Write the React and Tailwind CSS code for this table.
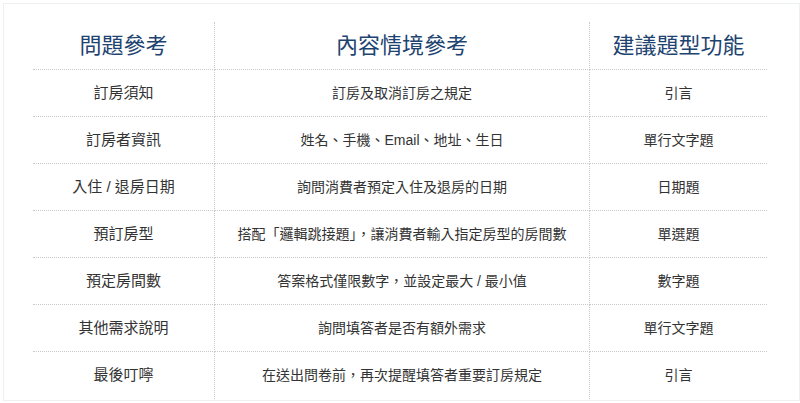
const rows = [
  ['訂房須知', '訂房及取消訂房之規定', '引言'],
  ['訂房者資訊', '姓名、手機、Email、地址、生日', '單行文字題'],
  ['入住 / 退房日期', '詢問消費者預定入住及退房的日期', '日期題'],
  ['預訂房型', '搭配「邏輯跳接題」，讓消費者輸入指定房型的房間數', '單選題'],
  ['預定房間數', '答案格式僅限數字，並設定最大 / 最小值', '數字題'],
  ['其他需求說明', '詢問填答者是否有額外需求', '單行文字題'],
  ['最後叮嚀', '在送出問卷前，再次提醒填答者重要訂房規定', '引言'],
]

export default function App() {
  return (
    <div
      className="w-[800px] h-[403px] bg-white overflow-hidden pt-[3px] pl-[3px]"
      style={{ fontFamily: '"Liberation Sans", "Noto Sans CJK TC", sans-serif' }}
    >
      <div className="w-[797px] h-[398px] border border-[#edf1f1] pl-[29px] pt-[18px]">
        <div className="grid grid-cols-[182px_375px_177px] text-[#333]">
          <div className="h-[48px] flex items-center justify-center border-b border-r border-dotted border-[#c9c9c9] text-[22px] text-[#1d4370]">問題參考</div>
          <div className="h-[48px] flex items-center justify-center border-b border-r border-dotted border-[#c9c9c9] text-[22px] text-[#1d4370]">內容情境參考</div>
          <div className="h-[48px] flex items-center justify-center border-b border-dotted border-[#c9c9c9] text-[22px] text-[#1d4370]">建議題型功能</div>

          {rows.map((r, i) => {
            const last = i === rows.length - 1
            return (
              <div key={i} className="contents">
                <div className={`h-[47px] flex items-center justify-center border-r border-dotted border-[#c9c9c9] text-[15px] ${last ? '' : 'border-b'}`}>{r[0]}</div>
                <div className={`h-[47px] flex items-center justify-center border-r border-dotted border-[#c9c9c9] text-[14px] ${last ? '' : 'border-b'}`}>{r[1]}</div>
                <div className={`h-[47px] flex items-center justify-center border-dotted border-[#c9c9c9] text-[14px] ${last ? '' : 'border-b'}`}>{r[2]}</div>
              </div>
            )
          })}
        </div>
      </div>
    </div>
  )
}
